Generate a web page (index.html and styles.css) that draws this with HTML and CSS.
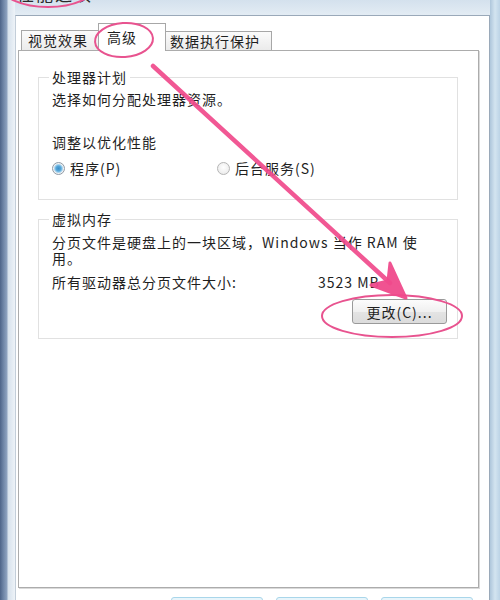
FILE: index.html
```html
<!DOCTYPE html>
<html lang="zh-CN">
<head>
    <meta charset="UTF-8">
    <title>性能选项</title>
    <link rel="stylesheet" href="styles.css">
</head>
<body>
    <div class="window">
        <div class="frame-left"></div>
        <div class="dialog">
            <div class="titlebar"><span class="title">性能选项</span></div>
            <div class="client">
                <div class="tabs">
                    <div class="tab tab-visual">视觉效果</div>
                    <div class="tab tab-advanced active">高级</div>
                    <div class="tab tab-dep">数据执行保护</div>
                </div>
                <div class="panel">
                    <fieldset class="group group-cpu">
                        <legend>处理器计划</legend>
                        <p class="intro">选择如何分配处理器资源。</p>
                        <p class="subhead">调整以优化性能</p>
                        <div class="radios">
                            <label class="radio"><span class="dot checked"></span>程序(P)</label>
                            <label class="radio"><span class="dot"></span>后台服务(S)</label>
                        </div>
                    </fieldset>
                    <fieldset class="group group-vm">
                        <legend>虚拟内存</legend>
                        <p class="desc">分页文件是硬盘上的一块区域，Windows 当作 RAM 使<br>用。</p>
                        <div class="size-row">
                            <span>所有驱动器总分页文件大小:</span>
                            <span>3523 MB</span>
                        </div>
                        <div class="actions">
                            <button class="btn">更改(C)...</button>
                        </div>
                    </fieldset>
                </div>
                <div class="footer">
                    <button class="btn btn-foot">确定</button>
                    <button class="btn btn-foot">取消</button>
                    <button class="btn btn-foot">应用(A)</button>
                </div>
            </div>
        </div>
        <div class="frame-right"></div>

        <!-- 标注：圆圈和箭头 -->
        <svg class="marks" width="500" height="600" viewBox="0 0 500 600">
            <g fill="none" stroke="#e8538f" stroke-width="2">
                <ellipse cx="48" cy="-14" rx="47" ry="21"/>
                <ellipse cx="124" cy="40" rx="29" ry="17" transform="rotate(-4 124 40)"/>
                <ellipse cx="392" cy="316" rx="70" ry="21"/>
            </g>
            <line x1="153" y1="66" x2="390" y2="283" stroke="#f04a8c" stroke-width="4.5" stroke-linecap="round" opacity="0.92"/>
            <polygon points="406,298 371,285 388,281 390,263" fill="#f04a8c" stroke="#f04a8c" stroke-width="3" stroke-linejoin="round" opacity="0.95"/>
        </svg>
    </div>
</body>
</html>
```

FILE: styles.css
```css
body {
    margin: 0;
    padding: 0;
    background-color: #ffffff;
    font-family: "Noto Sans CJK SC", "Noto Sans", sans-serif;
    font-size: 14px;
    letter-spacing: 1px;
    line-height: 16px;
    color: #1f1f1f;
}

.window {
    position: relative;
    display: flex;
    width: 500px;
    height: 600px;
    overflow: hidden;
}

/* 窗口边框 */
.frame-left {
    width: 15px;
    flex-shrink: 0;
    background: linear-gradient(to right, #4d6488 0, #6a81a3 3px, #8ea3c0 7px, #d6e1ec 8px, #eef3f8 15px);
}

.frame-right {
    width: 10px;
    flex-shrink: 0;
    background: linear-gradient(to right, #aec6db, #d3e4f0 50%, #bcd3e6);
}

.dialog {
    flex: 1;
    display: flex;
    flex-direction: column;
    min-width: 0;
}

.titlebar {
    flex-shrink: 0;
    height: 15px;
    overflow: hidden;
    background: linear-gradient(#d4e1ed, #e3ecf4);
}

.title {
    display: block;
    margin-top: -16px;
    padding-left: 2px;
    font-size: 17px;
    line-height: 20px;
    letter-spacing: 2px;
    color: #2a2a2a;
}

.client {
    flex: 1 0 auto;
    background-color: #ffffff;
    border-top: 1px solid #9aa9b9;
    border-right: 1px solid #9aa9b9;
    border-left: 1px solid #c3ced9;
    padding: 0 10px 0 2px;
}

/* 选项卡 */
.tabs {
    display: flex;
    align-items: flex-end;
    height: 34px;
    padding-left: 3px;
}

.tab {
    box-sizing: border-box;
    border: 1px solid #a7a7a7;
    border-bottom: none;
    background: linear-gradient(#fbfbfb, #ebebeb);
    line-height: 18px;
    white-space: nowrap;
}

.tab-visual {
    width: 77px;
    height: 20px;
    padding-left: 6px;
    border-right: none;
}

.tab-advanced {
    width: 68px;
    height: 28px;
    padding-top: 4px;
    padding-left: 8px;
}

.tab-dep {
    width: 106px;
    height: 19px;
    padding-left: 4px;
    border-left: none;
}

.tab.active {
    position: relative;
    z-index: 1;
    margin-bottom: -1px;
    background: #ffffff;
}

.panel {
    box-sizing: border-box;
    height: 538px;
    border: 1px solid #acacac;
    box-shadow: 1px 1px 0 #dadada;
    padding: 16px 20px 0 19px;
    background-color: #ffffff;
}

/* 分组框 */
.group {
    margin: 0;
    min-width: 0;
    border: 1px solid #e1e1e1;
    padding: 0 10px 0 13px;
}

.group legend {
    padding: 0 3px;
    margin-left: -3px;
    line-height: 20px;
}

.group p {
    margin: 0;
    white-space: nowrap;
}

.group-cpu {
    padding-bottom: 23px;
}

.group-vm {
    margin-top: 9px;
    padding-bottom: 14px;
}

.intro {
    padding-top: 4px;
}

.subhead {
    padding-top: 27px;
}

.radios {
    display: grid;
    grid-template-columns: 165px auto;
    margin-top: 10px;
}

.radio {
    display: flex;
    align-items: center;
    gap: 5px;
    white-space: nowrap;
}

.dot {
    box-sizing: border-box;
    width: 13px;
    height: 13px;
    border-radius: 50%;
    border: 1px solid #b5b5b5;
    background: radial-gradient(circle at 50% 40%, #ffffff, #e6e6e6);
}

.dot.checked {
    border-color: #8e9aa6;
    background: radial-gradient(circle, #3c8fc9 0, #55a6d8 2.5px, #a8d4ef 4px, #f2f2f2 5px);
}

.desc {
    padding-top: 5px;
}

.size-row {
    display: grid;
    grid-template-columns: 266px auto;
    margin-top: 8px;
    white-space: nowrap;
}

.actions {
    display: flex;
    justify-content: flex-end;
    margin-top: 9px;
}

.btn {
    box-sizing: border-box;
    width: 95px;
    height: 25px;
    padding: 0;
    border: 1px solid #9a9a9a;
    border-radius: 3px;
    background: linear-gradient(#fcfcfc, #f0f0f0 50%, #e4e4e4 51%, #dcdcdc);
    font-family: inherit;
    font-size: 14px;
    letter-spacing: 1px;
    color: #1f1f1f;
}

.footer {
    display: flex;
    justify-content: flex-end;
    gap: 13px;
    margin-top: 9px;
    padding-right: 6px;
}

.btn-foot {
    width: 92px;
    border-color: #a9d6ea;
    background: #e8f5fb;
}

.marks {
    position: absolute;
    top: 0;
    left: 0;
    z-index: 2;
    pointer-events: none;
}
```
